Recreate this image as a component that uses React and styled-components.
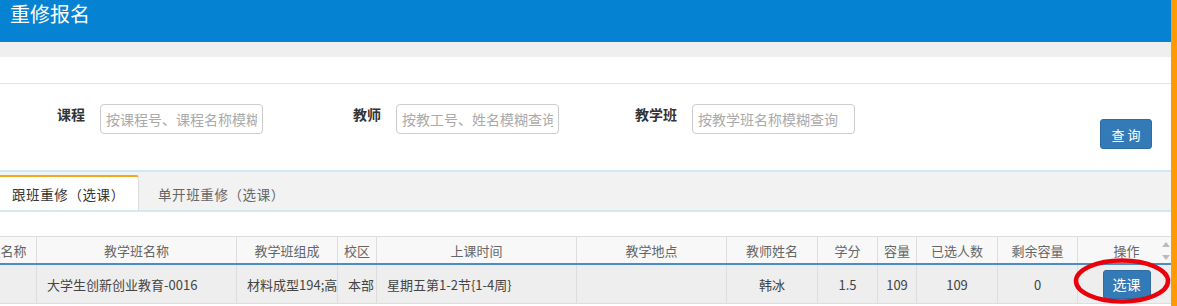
import React from 'react';
import styled, { createGlobalStyle } from 'styled-components';

const GlobalStyle = createGlobalStyle`
  html, body {
    margin: 0;
    padding: 0;
    background: #fff;
  }
  body {
    font-family: 'Noto Sans CJK SC', 'Liberation Sans', sans-serif;
    overflow: hidden;
  }
`;

const Page = styled.div`
  display: flex;
  width: 1177px;
  height: 306px;
  overflow: hidden;
`;

const Main = styled.div`
  width: 1171px;
  display: flex;
  flex-direction: column;
  position: relative;
`;

const EdgeBar = styled.div`
  width: 6px;
  background: #ff9b00;
`;

const TitleBar = styled.div`
  height: 42px;
  background: #0582d2;
  color: #fff;
  font-size: 20px;
  line-height: 28px;
  padding-left: 10px;
  box-sizing: border-box;
`;

const GrayBand = styled.div`
  height: 15px;
  background: #efefef;
`;

const Toolbar = styled.div`
  height: 26px;
  border-bottom: 1px solid #e3e3e3;
`;

const SearchForm = styled.div`
  height: 86px;
  display: flex;
  align-items: flex-start;
  padding: 20px 19px 0 4px;
  box-sizing: border-box;
`;

const Field = styled.div`
  width: 296px;
  display: flex;
  align-items: flex-start;
`;

const Label = styled.span`
  width: 81px;
  margin-right: 15px;
  text-align: right;
  font-size: 14px;
  font-weight: bold;
  line-height: 20px;
  color: #333;
`;

const Input = styled.input`
  width: 163px;
  height: 30px;
  box-sizing: border-box;
  border: 1px solid #ccc;
  border-radius: 4px;
  padding: 0 5px;
  font-family: inherit;
  font-size: 14px;
  color: #333;
  outline: none;
  &::placeholder {
    color: #aaa;
  }
`;

const Button = styled.button`
  width: ${p => p.$w || 52}px;
  height: ${p => p.$h || 30}px;
  background: #337ab7;
  border: 1px solid #2e6da4;
  border-radius: 3px;
  color: #fff;
  font-family: inherit;
  font-size: ${p => p.$fs || 13}px;
  padding: 0;
  white-space: pre;
  cursor: pointer;
`;

const QueryButton = styled(Button)`
  margin-left: auto;
  margin-top: 15px;
`;

const TabBar = styled.div`
  height: 42px;
  box-sizing: border-box;
  background: #f2f2f2;
  border-top: 2px solid #cfeaf1;
  border-bottom: 2px solid #cfeaf1;
  display: flex;
  align-items: flex-end;
`;

const Tab = styled.div`
  height: 35px;
  box-sizing: border-box;
  display: flex;
  align-items: center;
  font-size: 13.5px;
  letter-spacing: 0.6px;
  color: ${p => (p.$active ? '#333' : '#666')};
  background: ${p => (p.$active ? '#fff' : 'transparent')};
  border-top: 2px solid ${p => (p.$active ? '#f0a81e' : 'transparent')};
  border-right: 1px solid ${p => (p.$active ? '#ddd' : 'transparent')};
  border-top-right-radius: 3px;
  width: ${p => (p.$active ? '139px' : 'auto')};
  padding-left: ${p => (p.$active ? 12 : 19)}px;
`;

const Gap = styled.div`
  height: 24px;
`;

const TableArea = styled.div`
  overflow: hidden;
  position: relative;
  flex: 1;
`;

const Grid = styled.table`
  margin-left: -36px;
  border-collapse: collapse;
  table-layout: fixed;
  width: 1211px;
  font-size: 13px;
`;

const Th = styled.th`
  height: 26px;
  padding: 0;
  font-weight: normal;
  color: #666;
  background: #f8f8f8;
  border: 1px solid #ddd;
  border-bottom: 2px solid #4b8ccb;
  text-align: center;
  white-space: nowrap;
  overflow: hidden;
`;

const Td = styled.td`
  height: 38px;
  padding: 0 ${p => (p.$center ? 0 : 10)}px;
  color: #444;
  background: #eee;
  border: 1px solid #ddd;
  text-align: ${p => (p.$center ? 'center' : 'left')};
  white-space: nowrap;
  overflow: hidden;
`;

const ScrollArrows = styled.div`
  position: absolute;
  top: 2px;
  right: 0;
  width: 11px;
  height: 26px;
  display: flex;
  flex-direction: column;
  justify-content: space-around;
  align-items: center;
`;

const Ring = styled.svg`
  position: absolute;
  left: 1073px;
  top: 22px;
  pointer-events: none;
`;

const columns = [
  { w: 72, title: '课程名称' },
  { w: 200, title: '教学班名称' },
  { w: 101, title: '教学班组成' },
  { w: 39, title: '校区' },
  { w: 200, title: '上课时间' },
  { w: 150, title: '教学地点' },
  { w: 91, title: '教师姓名' },
  { w: 60, title: '学分' },
  { w: 39, title: '容量' },
  { w: 81, title: '已选人数' },
  { w: 80, title: '剩余容量' },
  { w: 98, title: '操作' },
];

export default function App() {
  return (
    <Page>
      <GlobalStyle />
      <Main>
        <TitleBar>重修报名</TitleBar>
        <GrayBand />
        <Toolbar />
        <SearchForm>
          <Field>
            <Label>课程</Label>
            <Input placeholder="按课程号、课程名称模糊查询" />
          </Field>
          <Field>
            <Label>教师</Label>
            <Input placeholder="按教工号、姓名模糊查询" />
          </Field>
          <Field>
            <Label>教学班</Label>
            <Input placeholder="按教学班名称模糊查询" />
          </Field>
          <QueryButton>查 询</QueryButton>
        </SearchForm>
        <TabBar>
          <Tab $active>跟班重修（选课）</Tab>
          <Tab>单开班重修（选课）</Tab>
        </TabBar>
        <Gap />
        <TableArea>
          <Grid>
            <colgroup>
              {columns.map(c => (
                <col key={c.title} style={{ width: c.w }} />
              ))}
            </colgroup>
            <thead>
              <tr>
                {columns.map(c => (
                  <Th key={c.title}>{c.title}</Th>
                ))}
              </tr>
            </thead>
            <tbody>
              <tr>
                <Td />
                <Td>大学生创新创业教育-0016</Td>
                <Td>材料成型194;高</Td>
                <Td>本部</Td>
                <Td>星期五第1-2节{'{'}1-4周{'}'}</Td>
                <Td />
                <Td $center>韩冰</Td>
                <Td $center>1.5</Td>
                <Td $center>109</Td>
                <Td $center>109</Td>
                <Td $center>0</Td>
                <Td $center>
                  <Button $w={48} $h={29} $fs={14}>选课</Button>
                </Td>
              </tr>
            </tbody>
          </Grid>
          <ScrollArrows>
            <svg width="8" height="5" viewBox="0 0 8 5">
              <path d="M4 0 L8 5 L0 5 Z" fill="#bbb" />
            </svg>
            <svg width="8" height="5" viewBox="0 0 8 5">
              <path d="M0 0 L8 0 L4 5 Z" fill="#bbb" />
            </svg>
          </ScrollArrows>
          <Ring width="98" height="46" viewBox="0 0 98 46">
            <ellipse cx="49" cy="23" rx="46" ry="20.5" fill="none" stroke="#e8000b" strokeWidth="4.5" />
          </Ring>
        </TableArea>
      </Main>
      <EdgeBar />
    </Page>
  );
}
